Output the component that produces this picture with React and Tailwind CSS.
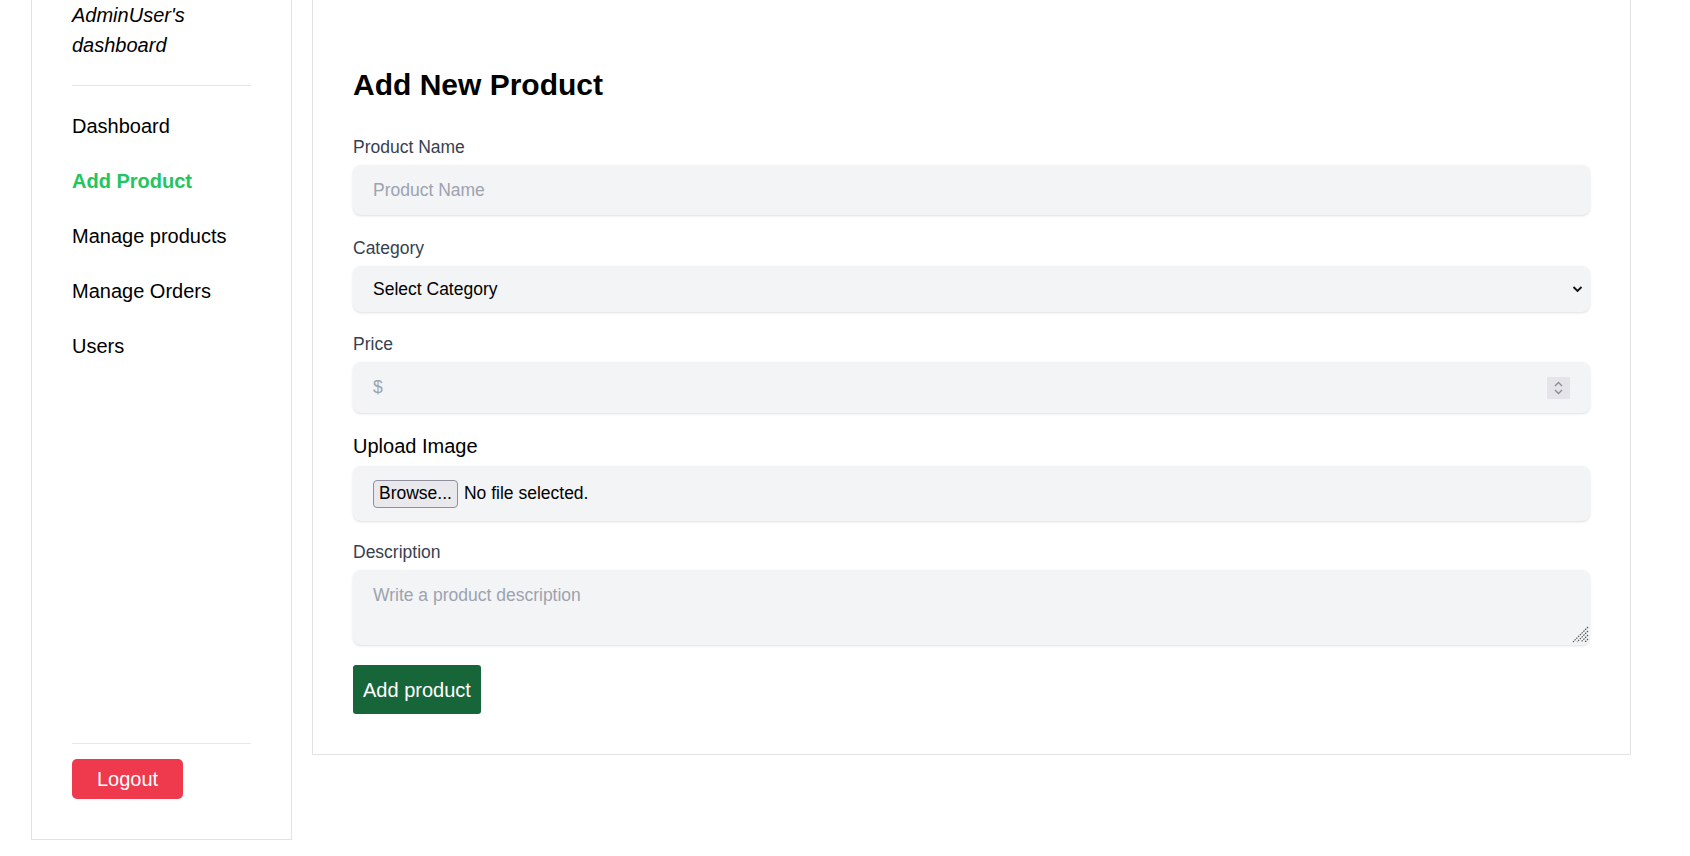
import React from 'react';

const navItems = ['Dashboard', 'Add Product', 'Manage products', 'Manage Orders', 'Users'];

function Sidebar() {
  return (
    <aside className="w-[261px] h-[840px] shrink-0 border-x border-b border-[#e3e3e3] px-10 pb-10 flex flex-col">
      <div className="italic text-[20px] leading-[30px] text-black">
        AdminUser's
        <br />
        dashboard
      </div>
      <hr className="mt-[25px] border-t border-[#e5e7eb]" />
      <ul className="mt-[25px] flex flex-col gap-[25px]">
        {navItems.map((item) => (
          <li
            key={item}
            className={
              item === 'Add Product'
                ? 'text-[20px] leading-[30px] font-bold text-[#22c55e]'
                : 'text-[20px] leading-[30px] text-black'
            }
          >
            {item}
          </li>
        ))}
      </ul>
      <div className="flex-1" />
      <hr className="border-t border-[#e5e7eb]" />
      <button className="mt-[15px] w-[111px] h-10 rounded-[5px] bg-[#ee3a4c] text-white text-[20px] leading-none">
        Logout
      </button>
    </aside>
  );
}

function Label({ children, className = '' }) {
  return (
    <label className={'block text-[17.5px] leading-[26px] text-[#374151] mb-[5px] ' + className}>
      {children}
    </label>
  );
}

function AddProductForm() {
  return (
    <main className="w-[1319px] shrink-0 border-x border-b border-[#e3e3e3] px-10 pt-[67px] pb-10">
      <h1 className="text-[30px] leading-[36px] font-bold text-black mb-[31px]">Add New Product</h1>

      <div className="mb-[20px]">
        <Label>Product Name</Label>
        <input
          type="text"
          placeholder="Product Name"
          className="w-full h-[50px] px-5 rounded-lg bg-[#f3f4f6] shadow-sm text-[17.5px] text-black placeholder:text-[#9ca3af] outline-none"
        />
      </div>

      <div className="mb-[19px]">
        <Label>Category</Label>
        <div className="relative">
          <select className="w-full h-[46px] px-5 rounded-lg bg-[#f3f4f6] shadow-sm text-[17.5px] text-black appearance-none outline-none">
            <option>Select Category</option>
          </select>
          <svg
            className="absolute right-[7px] top-1/2 -translate-y-1/2 pointer-events-none"
            width="11"
            height="8"
            viewBox="0 0 11 8"
            fill="none"
          >
            <path d="M1.5 2 L5.5 6 L9.5 2" stroke="#111" strokeWidth="1.8" />
          </svg>
        </div>
      </div>

      <div className="mb-[18px]">
        <Label>Price</Label>
        <div className="relative">
          <input
            type="text"
            placeholder="$"
            className="w-full h-[51px] px-5 rounded-lg bg-[#f3f4f6] shadow-sm text-[17.5px] text-black placeholder:text-[#9ca3af] outline-none"
          />
          <div className="absolute right-5 top-1/2 -translate-y-1/2 w-[23px] h-[22px] bg-[#e4e4e9] flex flex-col items-center justify-center gap-[2px] pointer-events-none">
            <svg width="9" height="6" viewBox="0 0 9 6" fill="none">
              <path d="M1 5 L4.5 1.5 L8 5" stroke="#8a8a95" strokeWidth="1.3" />
            </svg>
            <svg width="9" height="6" viewBox="0 0 9 6" fill="none">
              <path d="M1 1 L4.5 4.5 L8 1" stroke="#8a8a95" strokeWidth="1.3" />
            </svg>
          </div>
        </div>
      </div>

      <div className="mb-[18px]">
        <label className="block text-[20px] leading-[30px] text-black mb-[5px]">Upload Image</label>
        <div className="w-full h-[55px] px-5 rounded-lg bg-[#f3f4f6] shadow-sm flex items-center gap-[6px] text-[17.5px] text-black">
          <button className="h-[28px] px-[5px] rounded-[4px] border border-[#8f8f9d] bg-[#e9e9ed] text-[17.5px] leading-none text-black">
            Browse...
          </button>
          <span>No file selected.</span>
        </div>
      </div>

      <div className="mb-[20px]">
        <Label>Description</Label>
        <div className="relative">
          <textarea
            placeholder="Write a product description"
            className="block w-full h-[75px] px-5 pt-[12px] pb-[8px] rounded-lg bg-[#f3f4f6] shadow-sm text-[17.5px] leading-[26px] text-black placeholder:text-[#9ca3af] outline-none resize-none"
          />
          <svg
            className="absolute right-[1px] bottom-[2px] pointer-events-none"
            width="18"
            height="18"
            viewBox="0 0 18 18"
            fill="none"
          >
            <path
              d="M17 2 L2 17 M17 6 L6 17 M17 10 L10 17 M17 14 L14 17"
              stroke="#555"
              strokeWidth="1.2"
              strokeDasharray="1.5 1"
            />
          </svg>
        </div>
      </div>

      <button className="h-[49px] px-[10px] rounded-[3px] bg-[#17663a] text-white text-[20px] leading-none">
        Add product
      </button>
    </main>
  );
}

export default function App() {
  return (
    <div
      className="min-h-screen bg-white flex items-start gap-[20px] pl-[31px]"
      style={{ fontFamily: '"Liberation Sans", Arial, sans-serif' }}
    >
      <Sidebar />
      <AddProductForm />
    </div>
  );
}
